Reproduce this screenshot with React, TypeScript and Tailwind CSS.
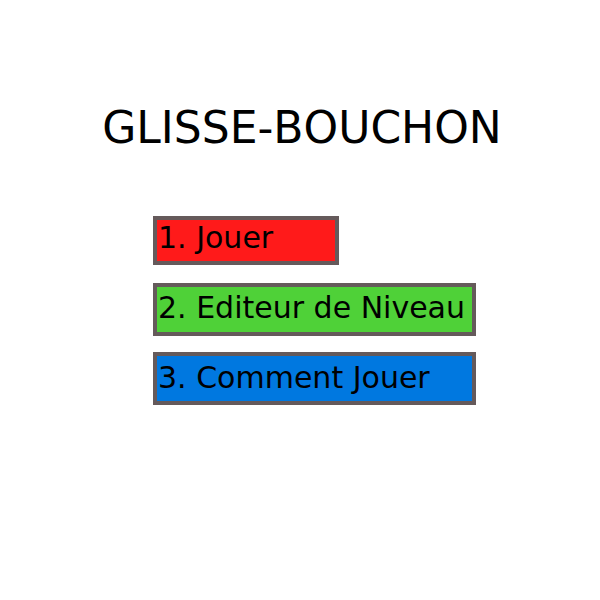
export default function App() {
  const item = "border-4 border-[#655a5b] pl-px text-left text-[30px] leading-9 whitespace-nowrap text-black";
  return (
    <main className="min-h-screen bg-white font-['DejaVu_Sans',sans-serif]">
      <h1 className="pt-[100px] pl-1 text-center text-[44px] leading-[56px] text-black [font-kerning:none]">GLISSE-BOUCHON</h1>
      <div className="flex justify-center pt-[60px] pl-[29px]">
        <nav className="flex w-[323px] flex-col items-start">
          <button type="button" className={`${item} h-[49px] w-[186px] bg-[#ff1a1a] pb-1.5`}>1. Jouer</button>
          <button type="button" className={`${item} mt-[18px] h-[53px] w-full bg-[#4fd138] pb-1`}>2. Editeur de Niveau</button>
          <button type="button" className={`${item} mt-4 h-[53px] w-full bg-[#0078e0] pb-0.5`}>3. Comment Jouer</button>
        </nav>
      </div>
    </main>
  );
}
